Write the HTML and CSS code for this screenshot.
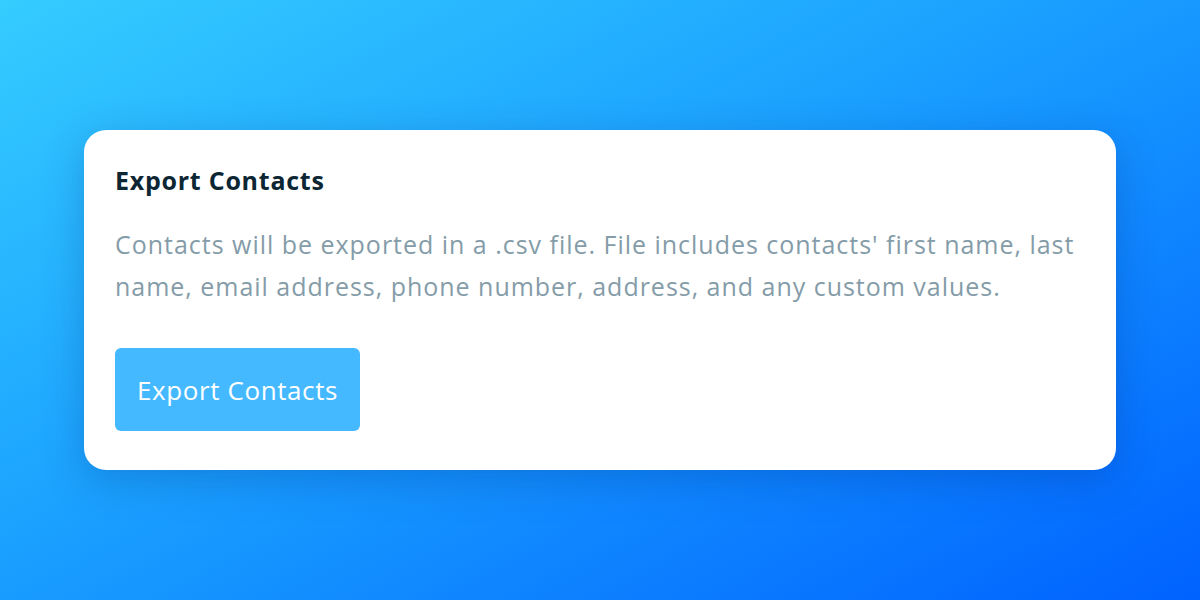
FILE: index.html
```html
<!DOCTYPE html>
<html>
<head>
<meta charset="utf-8">
<link rel="stylesheet" href="styles.css">
</head>
<body>
<main class="stage">
  <section class="card">
    <h1 class="title">Export Contacts</h1>
    <p class="desc">Contacts will be exported in a .csv file. File includes contacts' first name, last name, email address, phone number, address, and any custom values.</p>
    <button class="btn">Export Contacts</button>
  </section>
</main>
</body>
</html>
```

FILE: styles.css
```css
html, body {
  margin: 0;
  padding: 0;
}
body {
  width: 1200px;
  height: 600px;
  overflow: hidden;
  font-family: "Open Sans", "Lato", sans-serif;
}
.stage {
  width: 1200px;
  height: 600px;
  background: linear-gradient(152deg, #35ccff 0%, #1aa0ff 45%, #0062ff 100%);
  display: flex;
  align-items: center;
  justify-content: center;
}
.card {
  box-sizing: border-box;
  width: 1032px;
  height: 340px;
  background: #fff;
  border-radius: 22px;
  padding: 35px 31px 0 31px;
  box-shadow: 0 10px 40px rgba(0, 40, 120, 0.25);
}
.title {
  margin: 0;
  font-size: 25px;
  font-weight: 700;
  letter-spacing: 0.75px;
  color: #0d2633;
  line-height: 30px;
}
.desc {
  margin: 28px 0 0 0;
  font-size: 25px;
  letter-spacing: 0.98px;
  line-height: 42px;
  color: #849ca8;
}
.btn {
  margin-top: 41px;
  width: 245px;
  height: 83px;
  border: none;
  border-radius: 6px;
  background: #45b9ff;
  color: #fff;
  font-family: inherit;
  font-size: 26px;
  letter-spacing: 0.6px;
  padding: 0;
}
```
